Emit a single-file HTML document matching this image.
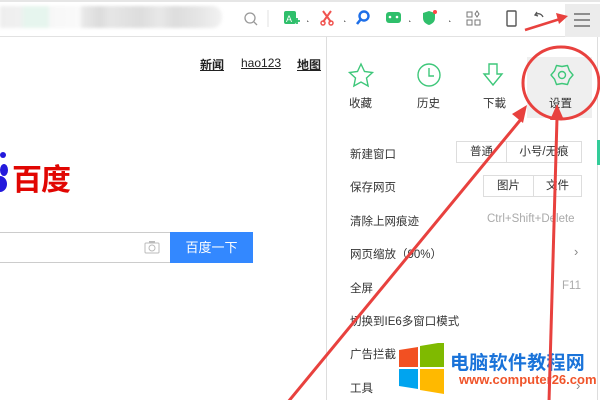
<!DOCTYPE html>
<html><head><meta charset="utf-8">
<style>
*{margin:0;padding:0;box-sizing:border-box}
body{width:600px;height:400px;overflow:hidden;background:#fff;position:relative;font-family:"Liberation Sans","Noto Sans CJK SC",sans-serif;color:#333}
.a{position:absolute}
.tb{left:0;top:0;width:600px;height:37px;background:#fff;border-bottom:1px solid #e2e2e2;border-top:2px solid #e6e6e6}
.addr{left:0;top:6px;width:222px;height:22px;background:linear-gradient(90deg,#eee 0,#f0f0f0 20px,#e6f5ee 25px,#e6f5ee 48px,#f7f7f7 50px,#fafafa 80px,#e9e9e9 82px,#dcdcdc 100px,#e6e6e6 110px,#ddd 140px,#e8e8e8 160px,#ddd 175px,#e6e6e6 200px,#f2f2f2 222px);filter:blur(1.5px);border-radius:0 10px 10px 0}
.menu{left:326px;top:37px;width:272px;height:363px;background:#fff;border-left:1px solid #ddd;border-right:1px solid #ddd}
.row{position:absolute;left:350px;font-size:11.5px;color:#333}
.btn{position:absolute;height:22px;border:1px solid #ddd;font-size:11.5px;text-align:center;line-height:20px;color:#333;background:#fff}
.lbl{position:absolute;font-size:11.5px;top:95px;color:#333}
.lk{position:absolute;top:56px;font-size:12px;font-weight:bold;text-decoration:underline;color:#222}
</style></head><body>
<div class="a tb"></div>
<div class="a addr"></div>
<svg class="a" style="left:0;top:0" width="600" height="37">
<circle cx="250" cy="18" r="5" fill="none" stroke="#999" stroke-width="1.3"/><line x1="254" y1="22" x2="257" y2="25" stroke="#999" stroke-width="1.3"/>
<line x1="268" y1="10" x2="268" y2="27" stroke="#e0e0e0"/>
<rect x="284" y="11" width="12" height="13" rx="2" fill="#2fbf6b"/><text x="286" y="22" font-size="9" fill="#fff" font-family="Liberation Sans">A</text><path d="M294 21h6M297 18v6" stroke="#2fbf6b" stroke-width="1.8"/>
<path d="M307 20l2 2 -2 0z" fill="#777"/>
<path d="M323 11l8 11M331 11l-8 11" stroke="#f0534f" stroke-width="2"/><circle cx="323" cy="23" r="2" fill="none" stroke="#f0534f" stroke-width="1.5"/><circle cx="331" cy="23" r="2" fill="none" stroke="#f0534f" stroke-width="1.5"/>
<path d="M344 20l2 2 -2 0z" fill="#777"/>
<circle cx="364" cy="16" r="4.5" fill="none" stroke="#1e6fe8" stroke-width="2.4"/><line x1="361" y1="19" x2="357" y2="24" stroke="#1e6fe8" stroke-width="2.6"/>
<rect x="386" y="12" width="15" height="11" rx="3" fill="#2fbf6b"/><circle cx="390" cy="17" r="1.3" fill="#fff"/><circle cx="397" cy="17" r="1.3" fill="#fff"/>
<path d="M409 20l2 2 -2 0z" fill="#777"/>
<path d="M429 11l6 2v5c0 4-3 6-6 7-3-1-6-3-6-7v-5z" fill="#2fbf6b"/><circle cx="435" cy="12" r="2" fill="#f44"/>
<path d="M449 20l2 2 -2 0z" fill="#777"/>
<rect x="467" y="12" width="5" height="5" fill="none" stroke="#777"/><rect x="467" y="20" width="5" height="5" fill="none" stroke="#777"/><rect x="475" y="20" width="5" height="5" fill="none" stroke="#777"/><path d="M477 11l2 3-2 3-2-3z" fill="none" stroke="#777"/>
<rect x="507" y="11" width="9" height="15" rx="1" fill="none" stroke="#555" stroke-width="1.4"/>
<path d="M543 17c-2-4-6-4-8-2" fill="none" stroke="#555" stroke-width="1.3"/><path d="M537 12l-2 3 3 1" fill="none" stroke="#555" stroke-width="1.3"/>
<rect x="565" y="4" width="35" height="33" fill="#ececec"/>
<path d="M574 14h16M574 20h16M574 26h16" stroke="#555" stroke-width="1.3"/>
</svg>
<a class="lk" style="left:200px">新闻</a>
<a class="lk" style="left:241px;font-weight:normal">hao123</a>
<a class="lk" style="left:297px">地图</a>
<svg class="a" style="left:0;top:150px" width="12" height="60"><circle cx="3" cy="5" r="3" fill="#2319dc"/><ellipse cx="4" cy="20" rx="4" ry="6" fill="#2319dc"/><ellipse cx="0" cy="34" rx="7" ry="8" fill="#2319dc"/></svg>
<div class="a" style="left:12px;top:163px;font-size:30px;font-weight:bold;color:#e10602;line-height:36px;letter-spacing:-1px">百度</div>
<div class="a" style="left:-2px;top:232px;width:172px;height:31px;border:1px solid #ccc;border-right:none"></div>
<svg class="a" style="left:144px;top:240px" width="16" height="14"><rect x="1" y="3" width="14" height="10" rx="1" fill="none" stroke="#bbb"/><rect x="5" y="1" width="6" height="2" fill="#bbb"/><circle cx="8" cy="8" r="3" fill="none" stroke="#bbb"/></svg>
<div class="a" style="left:170px;top:232px;width:83px;height:31px;background:#3388ff;color:#fff;font-size:13px;text-align:center;line-height:31px">百度一下</div>

<div class="a menu"></div>
<div class="a" style="left:597px;top:140px;width:3px;height:25px;background:#3c9"></div>
<div class="a" style="left:527px;top:57px;width:65px;height:61px;background:#efefef"></div>
<svg class="a" style="left:326px;top:37px" width="272" height="60">
<path d="M35 27l3.5 7.5 8 1-6 5.5 1.6 8-7.1-4-7.1 4 1.6-8-6-5.5 8-1z" fill="none" stroke="#3ec77a" stroke-width="1.4"/>
<circle cx="103" cy="38" r="11" fill="none" stroke="#3ec77a" stroke-width="1.4"/><path d="M103 31v8h5" fill="none" stroke="#3ec77a" stroke-width="1.4"/>
<path d="M163 27h8v10h5l-9 11-9-11h5z" fill="none" stroke="#3ec77a" stroke-width="1.4"/>
<path d="M247 38L243.4 42.25 241.5 47.5 236 46.5 230.5 47.5 228.6 42.25 225 38 228.6 33.75 230.5 28.5 236 29.5 241.5 28.5 243.4 33.75z" fill="none" stroke="#3ec77a" stroke-width="1.4" stroke-linejoin="round"/>
<circle cx="236" cy="38" r="3.5" fill="none" stroke="#3ec77a" stroke-width="1.4"/>
</svg>
<div class="lbl" style="left:349px">收藏</div>
<div class="lbl" style="left:417px">历史</div>
<div class="lbl" style="left:483px">下載</div>
<div class="lbl" style="left:549px">设置</div>

<div class="row" style="top:146px">新建窗口</div>
<div class="btn" style="left:456px;top:141px;width:51px">普通</div>
<div class="btn" style="left:506px;top:141px;width:76px">小号/无痕</div>
<div class="row" style="top:179px">保存网页</div>
<div class="btn" style="left:483px;top:175px;width:51px">图片</div>
<div class="btn" style="left:533px;top:175px;width:49px">文件</div>
<div class="row" style="top:213px">清除上网痕迹</div>
<div class="a" style="left:487px;top:213px;font-size:11.5px;color:#aaa">Ctrl+Shift+Delete</div>
<div class="row" style="top:246px">网页缩放（90%）</div>
<div class="a" style="left:574px;top:244px;font-size:13px;color:#888">›</div>
<div class="row" style="top:280px">全屏</div>
<div class="a" style="left:562px;top:280px;font-size:11.5px;color:#aaa">F11</div>
<div class="row" style="top:313px">切换到IE6多窗口模式</div>
<div class="row" style="top:346px">广告拦截</div>
<div class="row" style="top:380px">工具</div>
<div class="a" style="left:576px;top:378px;font-size:13px;color:#888">›</div>

<svg class="a" style="left:396px;top:343px" width="52" height="52">
<path d="M3 7l19-3v20H3z" fill="#f25022"/><path d="M24 3l24-4v25H24z" fill="#7fba00"/>
<path d="M3 26h19v20l-19-3z" fill="#00a4ef"/><path d="M24 26h24v25l-24-4z" fill="#ffb900"/>
</svg>
<div class="a" style="left:450px;top:348px;font-size:19px;font-weight:bold;color:#1a73d9;letter-spacing:0.3px">电脑软件教程网</div>
<div class="a" style="left:459px;top:372px;font-size:13px;font-weight:bold;color:#f0542a;font-family:'Liberation Sans',sans-serif;letter-spacing:0">www.computer26.com</div>

<svg class="a" style="left:0;top:0" width="600" height="400">
<g stroke="#e8413e" fill="#e8413e">
<ellipse cx="561" cy="83" rx="38" ry="36" fill="none" stroke-width="3"/>
<line x1="522" y1="118" x2="288" y2="402" stroke-width="3"/>
<path d="M527 105l-4 18-11-9z" stroke="none"/>
<line x1="557" y1="118" x2="549" y2="402" stroke-width="3"/>
<path d="M557 104l7 16-14 0z" stroke="none"/>
<line x1="525" y1="30" x2="560" y2="19" stroke-width="2.5"/>
<path d="M568 16l-12-3 3 11z" stroke="none"/>
</g>
</svg>
</body></html>
